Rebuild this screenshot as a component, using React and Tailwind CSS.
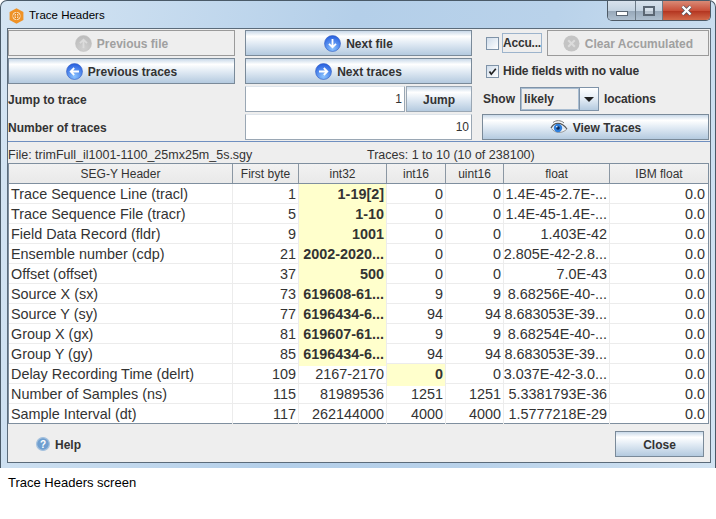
import React from "react";

const btn = "flex items-center justify-center gap-[5px] border border-[#7a8a99] bg-[linear-gradient(180deg,#c9d9e9_0%,#ffffff_22%,#e3ecf5_50%,#b4cadf_100%)] text-[12px] font-bold text-[#333] [&>span]:pt-[2px]";
const disabled = "flex items-center justify-center gap-[5px] border border-[#9a9a9a] bg-[#eeeeee] text-[12px] font-bold text-[#a0a0a0] [&>span]:pt-[2px]";
const label = "h-[26px] flex items-center [&>span]:pt-[2px]";

function Round({ dir, off }) {
  const rot = { up: -90, down: 90, left: 180, right: 0 }[dir];
  const id = "g" + dir + (off ? "o" : "");
  return (
    <svg width="17" height="17" viewBox="0 0 17 17" className="shrink-0">
      <defs>
        <radialGradient id={id} cx="50%" cy="80%" r="75%">
          <stop offset="0" stopColor={off ? "#d0d0d0" : "#8cc4ff"} />
          <stop offset="1" stopColor={off ? "#bcbcbc" : "#2a62e0"} />
        </radialGradient>
      </defs>
      <circle cx="8.5" cy="8.5" r="8" fill={`url(#${id})`} stroke={off ? "#c4c4c4" : "#3560c0"} strokeWidth="0.6" />
      <g transform={`rotate(${rot} 8.5 8.5)`}>
        <path d="M4 8.5H12M8.8 5L12.3 8.5L8.8 12" fill="none" stroke={off ? "#dcdcdc" : "#fff"} strokeWidth="1.8" />
      </g>
    </svg>
  );
}

function ClearIcon() {
  return (
    <svg width="17" height="17" viewBox="0 0 17 17" className="shrink-0">
      <circle cx="8.5" cy="8.5" r="8" fill="#c4c4c4" />
      <path d="M5.2 5.2L11.8 11.8M11.8 5.2L5.2 11.8" stroke="#dcdcdc" strokeWidth="2" />
    </svg>
  );
}

function Eye() {
  return (
    <svg width="18" height="16" viewBox="0 0 18 16" className="shrink-0">
      <path d="M1 9C4 3.5 11 2 17 10" fill="none" stroke="#555" strokeWidth="1.2" />
      <path d="M3 3.5C6 1 11 1 14 4" fill="none" stroke="#777" strokeWidth="1" />
      <path d="M1.5 9.5C5 14.5 12 15 17 10" fill="#eef2f6" stroke="#888" strokeWidth="0.8" />
      <circle cx="8" cy="9" r="4.2" fill="#2f7fdc" />
      <circle cx="8" cy="9" r="1.8" fill="#0b2a5c" />
      <circle cx="6.8" cy="7.8" r="0.8" fill="#fff" />
    </svg>
  );
}

function Help() {
  return (
    <svg width="14" height="14" viewBox="0 0 14 14" className="shrink-0">
      <circle cx="7" cy="7" r="6.4" fill="#6f9fd0" stroke="#a6c2de" strokeWidth="1.2" />
      <text x="7" y="10.5" textAnchor="middle" fontSize="10" fontWeight="700" fill="#fff" fontFamily="Liberation Sans">?</text>
    </svg>
  );
}

function Logo() {
  return (
    <svg width="15" height="16" viewBox="0 0 15 16">
      <path d="M7.5 0.3L14.4 4.1V11.9L7.5 15.7L0.6 11.9V4.1Z" fill="#ef9226" />
      <circle cx="7.5" cy="8" r="4" fill="#fbe3c2" />
      <circle cx="7.5" cy="8" r="2.8" fill="none" stroke="#e8861a" strokeWidth="1" />
      <path d="M7.5 4.5V11.5M4 8H11" stroke="#e8861a" strokeWidth="1" />
    </svg>
  );
}

const rows = [
  ["Trace Sequence Line (tracl)", "1", "1-19[2]", "0", "0", "1.4E-45-2.7E-...", "0.0", 1, 0],
  ["Trace Sequence File (tracr)", "5", "1-10", "0", "0", "1.4E-45-1.4E-...", "0.0", 1, 0],
  ["Field Data Record (fldr)", "9", "1001", "0", "0", "1.403E-42", "0.0", 1, 0],
  ["Ensemble number (cdp)", "21", "2002-2020...", "0", "0", "2.805E-42-2.8...", "0.0", 1, 0],
  ["Offset (offset)", "37", "500", "0", "0", "7.0E-43", "0.0", 1, 0],
  ["Source X (sx)", "73", "619608-61...", "9", "9", "8.68256E-40-...", "0.0", 1, 0],
  ["Source Y (sy)", "77", "6196434-6...", "94", "94", "8.683053E-39...", "0.0", 1, 0],
  ["Group X (gx)", "81", "619607-61...", "9", "9", "8.68254E-40-...", "0.0", 1, 0],
  ["Group Y (gy)", "85", "6196434-6...", "94", "94", "8.683053E-39...", "0.0", 1, 0],
  ["Delay Recording Time (delrt)", "109", "2167-2170", "0", "0", "3.037E-42-3.0...", "0.0", 0, 1],
  ["Number of Samples (ns)", "115", "81989536", "1251", "1251", "5.3381793E-36", "0.0", 0, 0],
  ["Sample Interval (dt)", "117", "262144000", "4000", "4000", "1.5777218E-29", "0.0", 0, 0],
];
const heads = ["SEG-Y Header", "First byte", "int32", "int16", "uint16", "float", "IBM float"];
const cols = "grid grid-cols-[224px_66px_88px_59px_58px_106px_98px]";

export default function App() {
  return (
    <div className="w-[716px] h-[519px] bg-white font-['Liberation_Sans',Arial,sans-serif] overflow-hidden">
      <div className="h-[468px] flex flex-col rounded-t-[7px] border border-[#4a5a68] border-b-0 bg-[linear-gradient(100deg,#d5e5f3_0%,#b4cfe9_45%,#b9d2ea_70%,#d2e3f2_100%)]">
        <div className="h-[27px] shrink-0 flex items-start pl-[8px] pr-[4px] relative">
          <div className="mt-[7px]"><Logo /></div>
          <span className="ml-[5px] mt-[7px] text-[11.5px] leading-[15px] text-black">Trace Headers</span>
          <div className="ml-auto flex h-[20px] border border-t-0 border-[#4e5a66] rounded-b-[5px] overflow-hidden">
            <div className="w-[28px] flex items-end justify-center pb-[4px] bg-[linear-gradient(180deg,#d8e2ec_0%,#c4d3e1_50%,#98a9ba_55%,#aebfcf_100%)] border-r border-[#6d7b88]">
              <div className="w-[12px] h-[5px] bg-white border border-[#5a6673]" />
            </div>
            <div className="w-[27px] flex items-center justify-center bg-[linear-gradient(180deg,#d8e2ec_0%,#c4d3e1_50%,#98a9ba_55%,#aebfcf_100%)] border-r border-[#6d7b88]">
              <div className="w-[12px] h-[10px] bg-white/30 border-2 border-[#5a6673]" />
            </div>
            <div className="w-[47px] flex items-center justify-center bg-[linear-gradient(180deg,#d98a76_0%,#c9503a_50%,#b53722_55%,#d26a4a_100%)]">
              <svg width="13" height="11" viewBox="0 0 13 11"><path d="M2.5 1.5L10.5 9.5M10.5 1.5L2.5 9.5" stroke="#4a5662" strokeWidth="3.8" /><path d="M2.5 1.5L10.5 9.5M10.5 1.5L2.5 9.5" stroke="#fff" strokeWidth="2.4" /></svg>
            </div>
          </div>
        </div>

        <div className="ml-[6px] mr-[4px] h-[435px] border border-[#5b6b7a] bg-[#eeeeee] flex flex-col">
          <div className="h-[112px] shrink-0 pt-[1px] pr-[1px] grid grid-cols-[228px_237px_1fr] text-[12px] font-bold text-[#333]">
            <div className="flex flex-col gap-[2px] pr-[1px]">
              <div className={`h-[26px] ${disabled}`}><Round dir="up" off /><span>Previous file</span></div>
              <div className={`h-[26px] ${btn}`}><Round dir="left" /><span>Previous traces</span></div>
              <div className={label}><span>Jump to trace</span></div>
              <div className={label}><span>Number of traces</span></div>
            </div>
            <div className="flex flex-col gap-[2px] pl-[9px] pr-[1px]">
              <div className={`h-[26px] ${btn}`}><Round dir="down" /><span>Next file</span></div>
              <div className={`h-[26px] ${btn}`}><Round dir="right" /><span>Next traces</span></div>
              <div className="h-[26px] flex gap-[1px]">
                <div className="w-[160px] bg-white border border-[#9aa7b4] border-t-[#dfe5eb] flex items-center justify-end pr-[2px] font-normal text-[12px]">1</div>
                <div className={`flex-1 ${btn} border-[#9aa7b4]`}><span>Jump</span></div>
              </div>
              <div className="h-[26px] bg-white border border-[#9aa7b4] border-t-[#dfe5eb] flex items-center justify-end pr-[2px] font-normal text-[12px]">10</div>
            </div>
            <div className="flex flex-col gap-[2px] pl-[9px]">
              <div className="h-[26px] flex items-center">
                <div className="ml-[4px] w-[13px] h-[13px] border border-[#7f93a8] bg-[linear-gradient(135deg,#cfdcea,#ffffff)]" />
                <div className="ml-[3px] w-[40px] h-[20px] border border-[#9db4cc] flex items-center justify-center tracking-[-0.2px]">Accu...</div>
                <div className={`ml-[5px] flex-1 h-[26px] ${disabled}`}><ClearIcon /><span>Clear Accumulated</span></div>
              </div>
              <div className="h-[26px] flex items-center">
                <div className="ml-[4px] w-[13px] h-[13px] border border-[#7f93a8] bg-[linear-gradient(135deg,#cfdcea,#ffffff)] flex items-center justify-center">
                  <svg width="9" height="9" viewBox="0 0 9 9"><path d="M1.5 4.5L3.3 7.2L7.8 1.8" fill="none" stroke="#222" strokeWidth="1.7" /></svg>
                </div>
                <span className="ml-[4px] tracking-[-0.16px]">Hide fields with no value</span>
              </div>
              <div className="h-[26px] flex items-center">
                <span className="ml-[1px]">Show</span>
                <div className="ml-[5px] h-[24px] w-[79px] flex border border-[#7f93a8]">
                  <div className="flex-1 flex items-center pl-[2px] border border-[#a9bdd1] bg-[#eeeeee]">likely</div>
                  <div className="w-[19px] flex items-center justify-center border-l border-[#7f93a8] bg-[linear-gradient(180deg,#ffffff_0%,#e3ecf5_50%,#b4cadf_100%)]">
                    <div className="w-0 h-0 border-l-[5px] border-r-[5px] border-t-[5px] border-l-transparent border-r-transparent border-t-[#222]" />
                  </div>
                </div>
                <span className="ml-[5px] tracking-[-0.1px]">locations</span>
              </div>
              <div className={`h-[26px] ${btn}`}><Eye /><span>View Traces</span></div>
            </div>
          </div>
          <div className="h-[1px] shrink-0 bg-[#6f8fc0]" />
          <div className="h-[21px] shrink-0 flex items-end text-[12.5px] leading-[15px] text-[#333]">
            <span className="w-[359px] shrink-0 whitespace-nowrap">File: trimFull_il1001-1100_25mx25m_5s.sgy</span>
            <span className="whitespace-nowrap">Traces: 1 to 10 (10 of 238100)</span>
          </div>
          <div className="w-fit shrink-0 border-l border-r border-t border-[#7f8f9f] text-[14.4px] text-[#333]">
            <div className={`${cols} h-[20px] text-[12px] border-b border-[#7f8f9f]`}>
              {heads.map((h) => (
                <div key={h} className="flex items-center justify-center border-r border-[#8b97a3] last:border-r-0 bg-[linear-gradient(180deg,#f2f2f2,#e9e9e9)]">{h}</div>
              ))}
            </div>
            {rows.map((r) => (
              <div key={r[0]} className={`${cols} h-[20px] bg-white border-b border-[#ececec] last:border-b-[#7f8f9f]`}>
                <div className="flex items-center pl-[2px] border-r border-[#ececec] whitespace-nowrap">{r[0]}</div>
                <div className="flex items-center justify-end pr-[2px] border-r border-[#ececec]">{r[1]}</div>
                <div className={`flex items-center justify-end pr-[2px] border-r border-[#ececec] whitespace-nowrap ${r[7] ? "bg-[#ffffcc] font-bold" : ""}`}>{r[2]}</div>
                <div className={`flex items-center justify-end pr-[2px] border-r border-[#ececec] ${r[8] ? "bg-[#ffffcc] font-bold" : ""}`}>{r[3]}</div>
                <div className="flex items-center justify-end pr-[2px] border-r border-[#ececec]">{r[4]}</div>
                <div className="flex items-center justify-end pr-[2px] border-r border-[#ececec] whitespace-nowrap">{r[5]}</div>
                <div className="flex items-center justify-end pr-[3px]">{r[6]}</div>
              </div>
            ))}
          </div>
          <div className="flex-1 flex items-center justify-between pl-[28px] pr-[6px] pt-[1px] text-[12px] font-bold text-[#333]">
            <div className="flex items-center gap-[5px] [&>span]:pt-[2px]"><Help /><span>Help</span></div>
            <div className={`w-[89px] h-[26px] ${btn}`}><span>Close</span></div>
          </div>
        </div>
      </div>
      <div className="pl-[8px] pt-[7px] text-[13px] leading-[15px] text-black">Trace Headers screen</div>
    </div>
  );
}
